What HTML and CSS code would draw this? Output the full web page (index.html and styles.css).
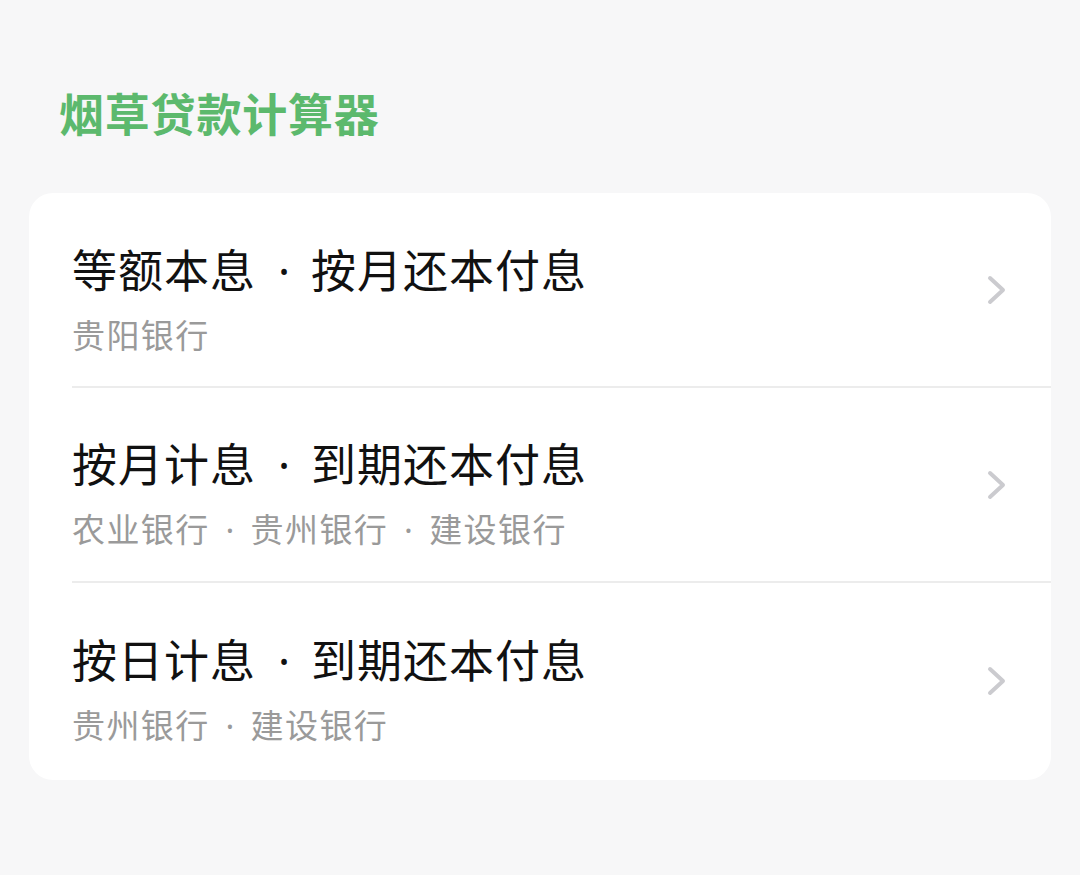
FILE: index.html
```html
<!DOCTYPE html>
<html lang="zh-CN">
<head>
<meta charset="utf-8">
<link rel="stylesheet" href="styles.css">
</head>
<body>
<div class="page">
  <h1 class="heading">烟草贷款计算器</h1>
  <div class="card">
    <div class="row">
      <div class="text">
        <div class="title">等额本息<span class="dot">·</span>按月还本付息</div>
        <div class="sub">贵阳银行</div>
      </div>
      <svg class="chev" width="20" height="30" viewBox="0 0 20 30"><polyline points="3,3 16,15 3,27" fill="none" stroke="#cbcbcf" stroke-width="4" stroke-linecap="round" stroke-linejoin="round"/></svg>
    </div>
    <div class="row">
      <div class="text">
        <div class="title">按月计息<span class="dot">·</span>到期还本付息</div>
        <div class="sub">农业银行<span class="dot">·</span>贵州银行<span class="dot">·</span>建设银行</div>
      </div>
      <svg class="chev" width="20" height="30" viewBox="0 0 20 30"><polyline points="3,3 16,15 3,27" fill="none" stroke="#cbcbcf" stroke-width="4" stroke-linecap="round" stroke-linejoin="round"/></svg>
    </div>
    <div class="row">
      <div class="text">
        <div class="title">按日计息<span class="dot">·</span>到期还本付息</div>
        <div class="sub">贵州银行<span class="dot">·</span>建设银行</div>
      </div>
      <svg class="chev" width="20" height="30" viewBox="0 0 20 30"><polyline points="3,3 16,15 3,27" fill="none" stroke="#cbcbcf" stroke-width="4" stroke-linecap="round" stroke-linejoin="round"/></svg>
    </div>
  </div>
</div>
</body>
</html>
```

FILE: styles.css
```css
html, body {
  margin: 0;
  padding: 0;
  background: #f7f7f8;
  font-family: "Noto Sans CJK SC", "Noto Sans", sans-serif;
}
.page {
  width: 1080px;
  height: 875px;
  padding: 84px 29px 0 29px;
  box-sizing: border-box;
}
.heading {
  margin: 0 0 51px 30px;
  font-size: 45px;
  line-height: 58px;
  font-weight: 700;
  color: #5cb96d;
  letter-spacing: 0.8px;
}
.card {
  background: #ffffff;
  border-radius: 24px;
  overflow: hidden;
  padding-bottom: 2px;
}
.row {
  display: flex;
  align-items: center;
  margin-left: 43px;
  height: 195px;
  box-sizing: border-box;
  border-bottom: 2px solid #ececec;
}
.row:last-child {
  border-bottom: none;
}
.text {
  flex: 1;
  display: flex;
  flex-direction: column;
  gap: 12px;
  margin-top: 17px;
}
.title {
  font-size: 45px;
  line-height: 58px;
  color: #111111;
  letter-spacing: 1px;
}
.sub {
  font-size: 33px;
  line-height: 44px;
  color: #9a9a9a;
  letter-spacing: 1.4px;
}
.dot {
  font-family: "Noto Sans", sans-serif;
  display: inline-block;
  text-align: center;
}
.title .dot {
  width: 53px;
  margin-left: 2px;
}
.sub .dot {
  width: 40px;
  margin-left: 1px;
}
.chev {
  margin-right: 44px;
  display: block;
}
```
